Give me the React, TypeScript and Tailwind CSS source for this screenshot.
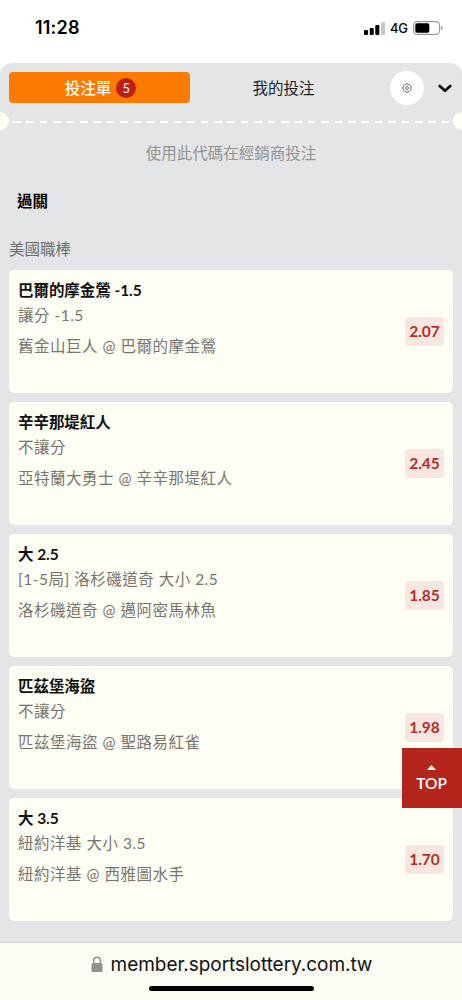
import React from 'react'

interface Bet {
  title: string
  market: string
  match: string
  odds: string
}

const bets: Bet[] = [
  { title: '巴爾的摩金鶯 -1.5', market: '讓分 -1.5', match: '舊金山巨人 @ 巴爾的摩金鶯', odds: '2.07' },
  { title: '辛辛那堤紅人', market: '不讓分', match: '亞特蘭大勇士 @ 辛辛那堤紅人', odds: '2.45' },
  { title: '大 2.5', market: '[1-5局] 洛杉磯道奇 大小 2.5', match: '洛杉磯道奇 @ 邁阿密馬林魚', odds: '1.85' },
  { title: '匹茲堡海盜', market: '不讓分', match: '匹茲堡海盜 @ 聖路易紅雀', odds: '1.98' },
  { title: '大 3.5', market: '紐約洋基 大小 3.5', match: '紐約洋基 @ 西雅圖水手', odds: '1.70' },
]

function StatusBar() {
  return (
    <div className="flex h-[63px] items-start justify-between bg-white pl-[35px] pr-[19px] font-['Inter',sans-serif] text-black">
      <span className="mt-[15px] text-[18px] font-semibold leading-[26px] tracking-[0.2px]">11:28</span>
      <div className="mt-[18px] flex h-5 items-center">
        <svg width="21" height="13" viewBox="0 0 21 13">
          <rect x="0" y="8" width="4" height="5" rx="1" />
          <rect x="5.7" y="6" width="4" height="7" rx="1" />
          <rect x="11.3" y="3" width="4" height="10" rx="1" />
          <rect x="17" y="0" width="4" height="13" rx="1" fill="#c8c8c8" />
        </svg>
        <span className="ml-[5px] w-[18px] text-[13px] font-medium leading-5 tracking-[-0.2px]">4G</span>
        <svg className="ml-[5px]" width="30" height="14" viewBox="0 0 30 14">
          <rect x="0.6" y="0.6" width="26" height="12.8" rx="3.6" fill="none" stroke="#9b9b9b" strokeWidth="1.2" />
          <rect x="2.3" y="2.3" width="14" height="9.4" rx="1.8" />
          <path d="M28.2 4.8 Q29.8 5.6 29.8 7 Q29.8 8.4 28.2 9.2Z" fill="#9b9b9b" />
        </svg>
      </div>
    </div>
  )
}

function Header() {
  return (
    <div className="flex h-[49px] items-center pl-[9px]">
      <div className="flex h-[31px] w-[181px] items-center justify-center gap-[5px] rounded bg-[#ff7b00] pl-[2px]">
        <span className="text-[15.5px] font-medium leading-[30px] text-[#fffdf4]">投注單</span>
        <span className="flex size-5 items-center justify-center rounded-full bg-[#c01d16] text-[13px] leading-5 text-white">5</span>
      </div>
      <span className="w-[187px] text-center text-[15.5px] leading-[30px] text-[#222]">我的投注</span>
      <div className="ml-[13px] flex size-[34px] items-center justify-center rounded-full bg-white">
        <svg width="10" height="10" viewBox="0 0 20 20" fill="none" stroke="#555" strokeWidth="1.6">
          <path d="M8.2 1.5h3.6l.7 2.3 2.2-1 2.6 2.6-1.1 2.1 2.4.8v3.4l-2.4.8 1.1 2.1-2.6 2.6-2.2-1-.7 2.3H8.2l-.7-2.3-2.2 1-2.6-2.6 1.1-2.1-2.4-.8V8.3l2.4-.8-1.1-2.1 2.6-2.6 2.2 1z" />
          <circle cx="10" cy="10" r="3" />
        </svg>
      </div>
      <svg className="ml-[14px] mt-0.5" width="14" height="9" viewBox="0 0 14 9" fill="none" stroke="#080808" strokeWidth="2.6" strokeLinecap="round" strokeLinejoin="round">
        <path d="M1.7 2 L7 6.8 L12.3 2" />
      </svg>
    </div>
  )
}

function Perforation() {
  return (
    <div className="flex h-[18px] items-center justify-between">
      <div className="h-[18px] w-[9px] rounded-r-full bg-[#fffef4]" />
      <div className="mt-[2px] h-[2px] w-[437px] bg-[repeating-linear-gradient(90deg,#fff_0px,#fff_7.6px,transparent_7.6px,transparent_13.4px)]" />
      <div className="h-[18px] w-[9px] rounded-l-full bg-[#fffef4]" />
    </div>
  )
}

function BetCard({ title, market, match, odds }: Bet) {
  return (
    <div className="flex h-[123.2px] shrink-0 items-center justify-between rounded-[5px] bg-[#fffef5] pl-[9px] pr-[9px]">
      <div className="flex h-full flex-col pt-[9px] text-[15.5px]">
        <h3 className="font-bold leading-[22px] tracking-[-0.05px] text-[#111]">{title}</h3>
        <p className="mt-[3.5px] leading-[22px] tracking-[0.5px] text-[#777570]">{market}</p>
        <p className="mt-[8.5px] leading-[22px] tracking-[0.5px] text-[#777570]">{match}</p>
      </div>
      <span className="flex h-[29px] w-[39px] items-center justify-center rounded bg-[#f8e6e1] text-[15.5px] font-bold text-[#b1302b]">
        {odds}
      </span>
    </div>
  )
}

function AddressBar() {
  return (
    <div className="flex h-[58px] flex-col items-center border-t border-[#d9d9d9] bg-[#fcfbf4] font-['Inter',sans-serif]">
      <div className="mt-[9px] flex h-[26px] items-center pl-px">
        <svg className="-mt-[2px]" width="12" height="16" viewBox="0 0 12 16">
          <path d="M2.7 8V4.6a3.3 3.3 0 0 1 6.6 0V8" fill="none" stroke="#91918d" strokeWidth="1.5" />
          <rect x="0.5" y="7" width="11" height="9" rx="1.5" fill="#91918d" />
        </svg>
        <span className="ml-[8px] whitespace-nowrap text-[19px] leading-[26px] tracking-[-0.05px] text-[#111]">member.sportslottery.com.tw</span>
      </div>
      <div className="mt-[8px] h-[5px] w-[165px] rounded-full bg-black" />
    </div>
  )
}

export default function App() {
  return (
    <div lang="zh-Hant" className="relative h-[1000px] w-[462px] overflow-hidden bg-white font-['Lato','Noto_Sans_CJK_TC',sans-serif]">
      <StatusBar />
      <main className="h-[879px] rounded-t-[12px] bg-[#e4e5e7]">
        <Header />
        <Perforation />
        <p className="mt-[11px] text-center text-[15.5px] leading-[24px] text-[#929292]">使用此代碼在經銷商投注</p>
        <h2 className="mt-[24px] pl-[17px] text-[15.5px] font-bold leading-[24px] text-black">過關</h2>
        <p className="mt-[24px] pl-[9px] text-[15.5px] leading-[24px] text-[#6c6c6c]">美國職棒</p>
        <div className="mt-[8.6px] flex flex-col gap-[8.9px] px-[9px]">
          {bets.map((bet) => (
            <BetCard key={bet.match} {...bet} />
          ))}
        </div>
      </main>
      <AddressBar />
      <button className="absolute right-0 top-[748px] flex h-[60px] w-[60px] flex-col items-center bg-[#b4251c] pr-px pt-[17px] text-white">
        <svg width="9" height="5" viewBox="0 0 9 5" fill="currentColor">
          <path d="M0 5 L4.5 0 L9 5Z" />
        </svg>
        <span className="mt-[2px] text-[15.5px] font-semibold leading-[22px]">TOP</span>
      </button>
    </div>
  )
}
